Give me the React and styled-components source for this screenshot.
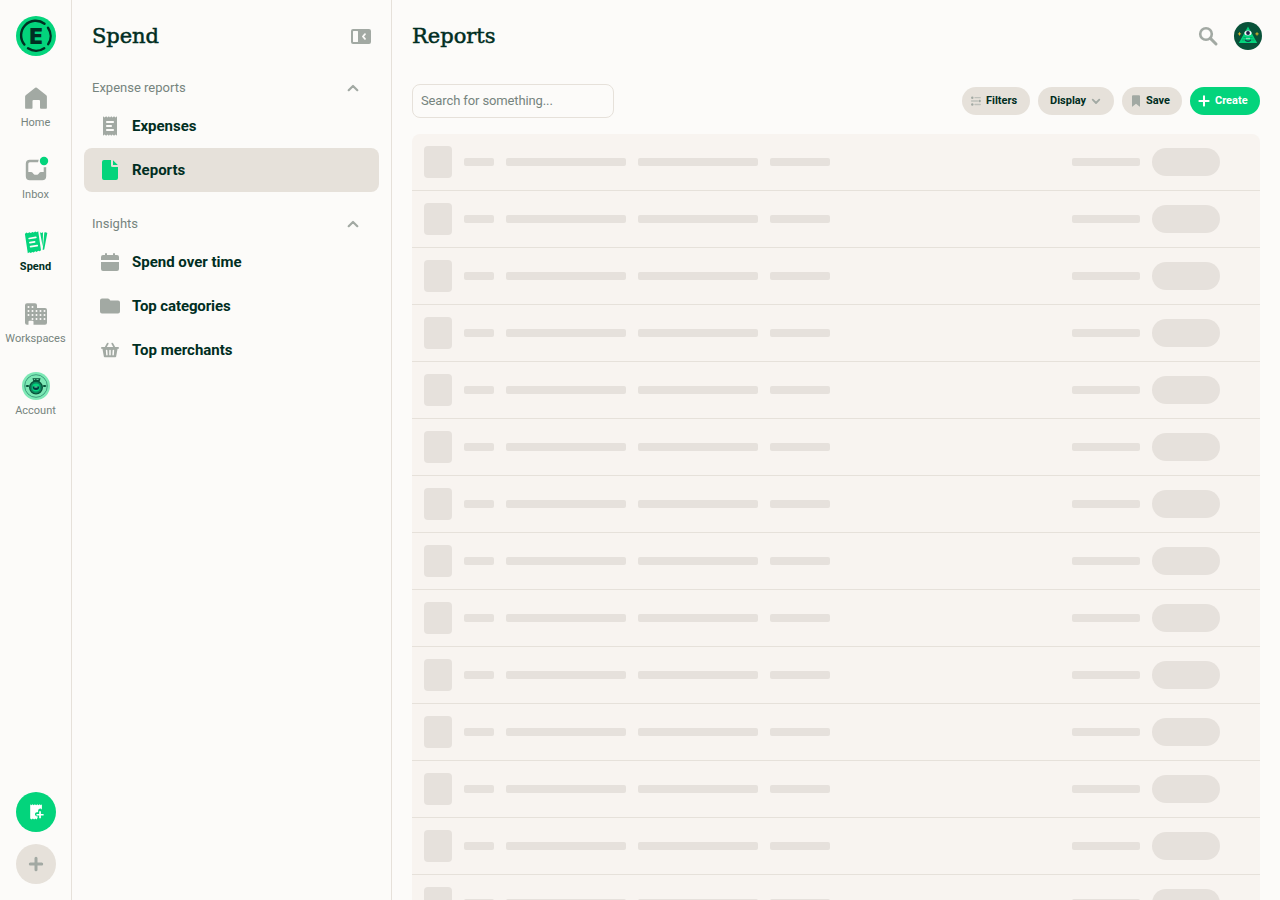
import styled, { createGlobalStyle } from "styled-components"

const GREEN = '#03D47C'
const DARK = '#002E22'
const GREY = '#A2A9A3'
const MUTED = '#76847E'
const BEIGE = '#E6E1DA'

const rows = Array.from({ length: 14 }, (_, i) => i)

export default function App() {
    return (
        <Page>
            <GlobalStyle />
            <Rail />
            <Sidebar />
            <Main />
        </Page>
    )
}

function Rail() {
    return (
        <RailBar>
            <LogoBox><Logo /></LogoBox>
            <RailItem>
                <RailIcon><HomeIcon /></RailIcon>
                <RailLabel>Home</RailLabel>
            </RailItem>
            <RailItem>
                <RailIcon><InboxIcon /></RailIcon>
                <RailLabel>Inbox</RailLabel>
            </RailItem>
            <RailItem>
                <RailIcon><SpendIcon /></RailIcon>
                <RailLabel $active>Spend</RailLabel>
            </RailItem>
            <RailItem>
                <RailIcon><BuildingIcon /></RailIcon>
                <RailLabel>Workspaces</RailLabel>
            </RailItem>
            <RailItem>
                <RailIcon><WorkspaceAvatar /></RailIcon>
                <RailLabel>Account</RailLabel>
            </RailItem>
            <RailBottom>
                <RoundButton $color={GREEN}><ReceiptPlusIcon /></RoundButton>
                <RoundButton $color={BEIGE}><PlusIcon size={20} color={GREY} /></RoundButton>
            </RailBottom>
        </RailBar>
    )
}

function Sidebar() {
    return (
        <SidePanel>
            <SideHeader>
                <Title $spacing="-0.05px">Spend</Title>
                <CollapseIcon />
            </SideHeader>
            <Section>
                <SectionTitle><span>Expense reports</span> <Chevron size={12} /></SectionTitle>
                <NavItem><NavIcon><ReceiptIcon /></NavIcon>Expenses</NavItem>
                <NavItem $active><NavIcon><DocumentIcon /></NavIcon>Reports</NavItem>
            </Section>
            <Section>
                <SectionTitle><span>Insights</span> <Chevron size={12} /></SectionTitle>
                <NavItem><NavIcon><CalendarIcon /></NavIcon>Spend over time</NavItem>
                <NavItem $spacing="-0.1px"><NavIcon><FolderIcon /></NavIcon>Top categories</NavItem>
                <NavItem><NavIcon><BasketIcon /></NavIcon>Top merchants</NavItem>
            </Section>
        </SidePanel>
    )
}

function Main() {
    return (
        <Content>
            <TopBar>
                <Title>Reports</Title>
                <TopActions>
                    <SearchIcon />
                    <UserAvatar />
                </TopActions>
            </TopBar>
            <Toolbar>
                <SearchInput placeholder="Search for something..." />
                <Buttons>
                    <PillButton $width={68}><FilterIcon /><span>Filters</span></PillButton>
                    <PillButton $width={76} $pad={12}><span>Display</span><Chevron size={12} down /></PillButton>
                    <PillButton $width={60}><BookmarkIcon /><span>Save</span></PillButton>
                    <PillButton $width={70} $gap={5} $primary><PlusIcon size={12} color="white" /><span>Create</span></PillButton>
                </Buttons>
            </Toolbar>
            <Table>
                {rows.map((r) =>
                    <Row key={r}>
                        <Thumb />
                        <Bar $width={30} />
                        <Bar $width={120} />
                        <Bar $width={120} />
                        <Bar $width={60} />
                        <Spacer />
                        <Bar $width={68} />
                        <Pill />
                    </Row>
                )}
            </Table>
        </Content>
    )
}

/* icons */

function Logo() {
    return (
        <svg width="40" height="40" viewBox="0 0 40 40">
            <circle cx="20" cy="20" r="20" fill={GREEN} />
            <g fill="none" stroke={DARK} strokeWidth="2.4" strokeLinecap="round">
                <path d="M8.400 28.600A14.600 14.600 0 0 1 28.500 7.700" />
                <path d="M32 11.800A14.600 14.600 0 0 1 32.200 28.200" />
                <path d="M12 32.300A14.600 14.600 0 0 0 28.200 32.200" />
            </g>
            <text x="20" y="28" textAnchor="middle" fontFamily="Inter, sans-serif" fontWeight="900" fontSize="21.5" fill={DARK}>E</text>
        </svg>
    )
}

function HomeIcon() {
    return (
        <svg width="24" height="24" viewBox="0 0 24 24" fill={GREY}>
            <path d="M11.2 1.7a1.3 1.3 0 0 1 1.6 0l9.2 7.2c.6.4.9 1 .9 1.700V21.700c0 .7-.4 1.100-1 1.100h-5c-.6 0-.9-.4-.9-1V15a1 1 0 0 0-1-1H9.500a1 1 0 0 0-1 1v6.800c0 .6-.4 1-1 1H2.200c-.7 0-1.100-.4-1.100-1.100V10.600c0-.7.300-1.300.9-1.700z" />
        </svg>
    )
}

function InboxIcon() {
    return (
        <svg width="28" height="28" viewBox="0 0 28 28">
            <path d="M16.800 3.800H7.800a4 4 0 0 0-4 4v12.400a4 4 0 0 0 4 4h12.400a4 4 0 0 0 4-4V11a6 6 0 0 1-2.500.2V16h-2.900a1.500 1.500 0 0 0-1.200.6l-1.200 1.500a1.500 1.500 0 0 1-1.200.6h-2.400a1.500 1.500 0 0 1-1.200-.6l-1.200-1.500A1.500 1.500 0 0 0 9.200 16H6.300V7.800A1.500 1.500 0 0 1 7.800 6.300h8.300a6 6 0 0 1 .7-2.500z" fill={GREY} />
            <circle cx="22" cy="5" r="4.200" fill={GREEN} />
        </svg>
    )
}

function SpendIcon() {
    return (
        <svg width="24" height="24" viewBox="0 0 24 24">
            <path d="M.9 3.900 2.300 2.600 3.900 3.300 5.300 2.200 6.900 2.900 8.300 1.900 9.800 2.600 11.200 1.500 12.700 2.200 14.200 1.200 17 20.200 15.600 21.300 14.100 20.700 12.700 21.900 11.200 21.300 9.700 22.500 8.300 21.900 6.800 23 5.400 22.300 3.800 23.300z" fill={GREEN} />
            <path d="M16 2.300 17.400 2.900 19 2.300 18.700 16.600z" fill={GREEN} />
            <path d="M20.300 2.600 21.700 2.200 23.300 3.100 20.200 19.500 18.700 19.900z" fill={GREEN} />
            <g stroke="#FCFBF9" strokeWidth="1.700" strokeLinecap="round">
                <path d="M5.200 8.500 11.800 7.400M5.900 12.600 10.600 11.800M6.600 16.700 13.200 15.600" />
            </g>
        </svg>
    )
}

function BuildingIcon() {
    const at = [[5, 5], [9, 5], [5, 9], [9, 9], [5, 13], [9, 13], [13, 9], [17, 9], [21, 9], [13, 13], [17, 13], [21, 13], [13, 17], [17, 17], [21, 17], [9, 17]]
    return (
        <svg width="24" height="24" viewBox="0 0 24 24">
            <path d="M3 1.200h8a2 2 0 0 1 2 2V6h8a2 2 0 0 1 2 2v12.800a2 2 0 0 1-2 2H9.500v-3a1 1 0 0 0-1-1h-3a1 1 0 0 0-1 1v3H3a2 2 0 0 1-2-2V3.200a2 2 0 0 1 2-2z" fill={GREY} />
            {at.map(([x, y]) => <circle key={x + '-' + y} cx={x - .5} cy={y} r="1" fill="#FCFBF9" />)}
        </svg>
    )
}

function WorkspaceAvatar() {
    return (
        <svg width="28" height="28" viewBox="0 0 28 28">
            <circle cx="14" cy="14" r="14" fill="#7DE8B5" />
            <circle cx="14" cy="14" r="11.300" fill="none" stroke="#2B8C6E" strokeWidth=".8" />
            <path d="M10.500 6.200h8l-1 3.800h-6z" fill="#085239" />
            <path d="M11.800 7.500h1.400M14.500 7.500h2" stroke="#7DE8B5" strokeWidth=".8" />
            <circle cx="14" cy="15.500" r="6.300" fill="#0E8A62" stroke="#085239" strokeWidth="1.300" />
            <circle cx="14" cy="15.500" r="3.900" fill="#03D47C" />
            <path d="M10.700 14.500h6.600a3.300 3.600 0 0 1-6.600 0z" fill="#003C40" />
            <path d="M12.400 14.500h3v1h-3z" fill="#7DE8B5" />
            <path d="M3.800 14h3M21.200 14h3" stroke="#085239" strokeWidth="1.400" />
            <circle cx="5.600" cy="14" r="1.100" fill="#085239" />
            <circle cx="22.400" cy="14" r="1.100" fill="#085239" />
        </svg>
    )
}

function UserAvatar() {
    return (
        <svg width="28" height="28" viewBox="0 0 28 28">
            <circle cx="14" cy="14" r="14" fill="#085239" />
            <path d="M14 4.500 23.200 21H4.800z" fill="#03D47C" />
            <path d="M11.500 9h5M9.500 15.500h2.500M16 15.500h2.500M8 18h3M17 18h3.500" stroke="#0A9B63" strokeWidth=".8" />
            <ellipse cx="14" cy="11" rx="3.600" ry="2.500" fill="#F5F3F8" />
            <circle cx="14" cy="11" r="1.900" fill="#1D2346" />
            <path d="M11 17.200q3 2.600 6 0v1.600q-3 2.600-6 0z" fill="#14404A" />
            <path d="M12 16.500h4" stroke="#A9DCC5" strokeWidth=".8" />
            <path d="M5.500 10.300v3.200M3.900 11.900h3.200M23 10.300v3.200M21.400 11.900h3.200" stroke="#D9B72B" strokeWidth="1" />
        </svg>
    )
}

function ReceiptPlusIcon() {
    return (
        <svg width="20" height="20" viewBox="0 0 20 20" fill="white">
            <path d="M4.200 2.300 5.300 3.200 6.500 2.300 7.700 3.200 8.900 2.300 10.100 3.200 11.300 2.300 12.500 3.200 13.700 2.300 14.900 3.200 15.900 2.300V7.700a2 2 0 0 0-3.800 1v1.600h-1.300a2 2 0 0 0-.5 3.900h1.300v1.600L10.500 17.500 9.300 16.600 8.100 17.500 6.900 16.600 5.700 17.500 4.200 16.600z" />
            <path d="M13.200 9.200h1.700v2.700h2.700v1.700h-2.700v2.700h-1.700v-2.700h-2.700v-1.700h2.700z" />
        </svg>
    )
}

function PlusIcon({ size, color }) {
    return (
        <svg width={size} height={size} viewBox="0 0 20 20">
            <path d={size > 12 ? "M10 4.300v11.400M4.300 10h11.400" : "M10 2.300v15.400M2.300 10h15.400"} stroke={color} strokeWidth={size > 12 ? 3 : 3.400} strokeLinecap="round" />
        </svg>
    )
}

function Chevron({ size, down }) {
    return (
        <svg width={size} height={size} viewBox="0 0 12 12">
            <path d={down ? "M2.700 4.700 6 8l3.300-3.300" : "M1.700 8.200 6 4l4.300 4.200"} fill="none" stroke={GREY} strokeWidth={down ? 1.800 : 2.200} strokeLinecap="round" strokeLinejoin="round" />
        </svg>
    )
}

function CollapseIcon() {
    return (
        <svg width="20" height="20" viewBox="0 0 20 20">
            <path fillRule="evenodd" d="M2 3h16a2 2 0 0 1 2 2v11a2 2 0 0 1-2 2H2a2 2 0 0 1-2-2V5a2 2 0 0 1 2-2zM2.500 5a.5.500 0 0 0-.5.500v10a.5.500 0 0 0 .5.500h4a.5.500 0 0 0 .5-.5v-10a.5.500 0 0 0-.5-.5z" fill={GREY} />
            <path d="M14 8.200 11.900 10.500l2.100 2.300" fill="none" stroke="#FCFBF9" strokeWidth="1.800" strokeLinecap="round" strokeLinejoin="round" />
        </svg>
    )
}

function ReceiptIcon() {
    return (
        <svg width="20" height="20" viewBox="0 0 20 20">
            <path d="M3 .3 4.500 1.400 6.200 .3 7.500 1.400 8.800 .3 10 1.400 11.300 .3 12.600 1.400 14 .3 15.500 1.400 17 .3V19.700L15.500 18.600 14 19.700 12.600 18.600 11.300 19.700 10 18.600 8.800 19.700 7.500 18.600 6.200 19.700 4.500 18.600 3 19.700z" fill={GREY} />
            <path d="M6.900 6h6.200M6.900 10h4.200M6.900 14h6.200" stroke="#FCFBF9" strokeWidth="1.900" strokeLinecap="round" />
        </svg>
    )
}

function DocumentIcon() {
    return (
        <svg width="20" height="20" viewBox="0 0 20 20" fill={GREEN}>
            <path d="M4 0h7v5.500A1.500 1.500 0 0 0 12.500 7H18v11a2 2 0 0 1-2 2H4a2 2 0 0 1-2-2V2a2 2 0 0 1 2-2z" />
            <path d="M13 .2 17.800 5H13z" />
        </svg>
    )
}

function CalendarIcon() {
    return (
        <svg width="20" height="20" viewBox="0 0 20 20" fill={GREY}>
            <path d="M5 2a1 1 0 0 1 2 0v1h6V2a1 1 0 0 1 2 0v1h2a2 2 0 0 1 2 2v3H1V5a2 2 0 0 1 2-2h2zM1 10h18v7a2 2 0 0 1-2 2H3a2 2 0 0 1-2-2z" />
        </svg>
    )
}

function FolderIcon() {
    return (
        <svg width="20" height="20" viewBox="0 0 20 20" fill={GREY}>
            <path d="M2 2.500h5.800c.7 0 1.200.3 1.600.8l.9 1.200H18a2 2 0 0 1 2 2v9a2 2 0 0 1-2 2H2a2 2 0 0 1-2-2v-11a2 2 0 0 1 2-2z" />
        </svg>
    )
}

function BasketIcon() {
    return (
        <svg width="20" height="20" viewBox="0 0 20 20">
            <path d="M1.900 7.900h16.200M5.600 7.400 7.700 3.600M14.400 7.400 12.300 3.600" stroke={GREY} strokeWidth="1.800" strokeLinecap="round" />
            <path d="M2.300 8h15.400l-1.500 8.300c-.1.700-.6 1-1.200 1H5c-.6 0-1.100-.3-1.200-1z" fill={GREY} />
            <path d="M6.600 10.400 6.900 14.800M10 10.400V14.800M13.400 10.400 13.100 14.800" stroke="#FCFBF9" strokeWidth="1.500" strokeLinecap="round" />
        </svg>
    )
}

function SearchIcon() {
    return (
        <svg width="20" height="20" viewBox="0 0 20 20" fill="none" stroke={GREY}>
            <circle cx="8" cy="8" r="5.800" strokeWidth="2.600" />
            <path d="M12.400 12.400 18 18" strokeWidth="2.900" strokeLinecap="round" />
        </svg>
    )
}

function FilterIcon() {
    return (
        <svg width="12" height="12" viewBox="0 0 12 12">
            <g stroke="#BFC1BB" strokeWidth="1.300" strokeLinecap="round">
                <path d="M5 2.700h5.300M1.500 6h6M5 9.500h5.300" />
            </g>
            <g fill={GREY}>
                <circle cx="2.300" cy="2.700" r="1.200" />
                <circle cx="9.700" cy="6" r="1.200" />
                <circle cx="2.300" cy="9.500" r="1.200" />
            </g>
        </svg>
    )
}

function BookmarkIcon() {
    return (
        <svg width="12" height="12" viewBox="0 0 12 12" fill={GREY}>
            <path d="M3 .3h6a1 1 0 0 1 1 1v10.100c0 .3-.3.400-.5.200L6 8.700 2.500 11.600c-.2.200-.5.100-.5-.2V1.300a1 1 0 0 1 1-1z" />
        </svg>
    )
}

const GlobalStyle = createGlobalStyle`
    *{
        box-sizing: border-box;
    }
    body{
        margin: 0;
        overflow: hidden;
        background-color: #FCFBF9;
        font-family: 'Roboto', sans-serif;
        color: ${DARK};
    }
    svg{
        display: block;
        flex-shrink: 0;
    }
`

const Page = styled.div`
    display: flex;
    width: 100%;
    height: 900px;
    overflow: hidden;
`

const RailBar = styled.div`
    display: flex;
    flex-direction: column;
    width: 72px;
    height: 100%;
    border-right: solid 1px ${BEIGE};
    flex-shrink: 0;
`

const LogoBox = styled.div`
    height: 72px;
    padding: 16px;
`

const RailItem = styled.div`
    display: flex;
    flex-direction: column;
    align-items: center;
    height: 72px;
    width: 72px;
    padding-top: 12px;
`

const RailIcon = styled.div`
    display: flex;
    align-items: center;
    justify-content: center;
    width: 28px;
    height: 28px;
`

const RailLabel = styled.div`
    margin-top: 3px;
    width: 72px;
    padding-right: 1px;
    text-align: center;
    font-size: 11px;
    line-height: 16px;
    font-weight: ${props => props.$active ? 700 : 400};
    color: ${props => props.$active ? DARK : MUTED};
`

const RailBottom = styled.div`
    display: flex;
    flex-direction: column;
    gap: 12px;
    margin-top: auto;
    padding: 16px;
`

const RoundButton = styled.div`
    display: flex;
    align-items: center;
    justify-content: center;
    width: 40px;
    height: 40px;
    border-radius: 50%;
    background-color: ${props => props.$color};
`

const SidePanel = styled.div`
    width: 320px;
    height: 100%;
    border-right: solid 1px ${BEIGE};
    flex-shrink: 0;
`

const SideHeader = styled.div`
    display: flex;
    align-items: center;
    justify-content: space-between;
    height: 72px;
    padding: 0 20px;
`

const Title = styled.h1`
    margin: 0;
    font-family: 'DejaVu Serif', serif;
    font-size: 21px;
    font-weight: 400;
    line-height: 28px;
    letter-spacing: ${props => props.$spacing || '0'};
    -webkit-text-stroke: 0.5px ${DARK};
`

const Section = styled.div`
    padding: 0 12px;
    margin-bottom: 16px;
`

const SectionTitle = styled.div`
    display: flex;
    align-items: center;
    justify-content: space-between;
    height: 32px;
    padding: 0 20px 0 8px;
    font-size: 13px;
    color: ${MUTED};
    span{
        padding-bottom: 2px;
    }
`

const NavItem = styled.div`
    display: flex;
    align-items: center;
    gap: 12px;
    height: 44px;
    padding-left: 16px;
    border-radius: 8px;
    font-size: 15px;
    font-weight: 700;
    letter-spacing: ${props => props.$spacing || '0'};
    background-color: ${props => props.$active ? BEIGE : 'transparent'};
`

const NavIcon = styled.div`
    width: 20px;
    height: 20px;
`

const Content = styled.div`
    flex: 1;
    padding: 0 20px;
`

const TopBar = styled.div`
    display: flex;
    align-items: center;
    justify-content: space-between;
    height: 72px;
`

const TopActions = styled.div`
    display: flex;
    align-items: center;
    gap: 16px;
    margin-right: -2px;
`

const Toolbar = styled.div`
    display: flex;
    align-items: center;
    justify-content: space-between;
    height: 34px;
    margin: 12px 0 16px;
`

const SearchInput = styled.input`
    width: 202px;
    height: 34px;
    padding: 0 8px 2px;
    border: solid 1px ${BEIGE};
    border-radius: 8px;
    background-color: transparent;
    font-family: 'Roboto', sans-serif;
    font-size: 13px;
    letter-spacing: -0.12px;
    outline: none;
    &::placeholder{
        color: ${MUTED};
        opacity: 1;
    }
`

const Buttons = styled.div`
    display: flex;
    gap: 8px;
`

const PillButton = styled.button`
    display: flex;
    align-items: center;
    gap: ${props => props.$gap || 4}px;
    width: ${props => props.$width}px;
    height: 28px;
    padding: 0 0 0 ${props => props.$pad || 8}px;
    border: none;
    border-radius: 14px;
    background-color: ${props => props.$primary ? GREEN : BEIGE};
    color: ${props => props.$primary ? 'white' : DARK};
    font-family: 'Roboto', sans-serif;
    font-size: 11px;
    font-weight: 700;
    cursor: pointer;
    span{
        padding-bottom: 2px;
    }
`

const Table = styled.div`
    border-radius: 8px 8px 0 0;
    background-color: #F8F4F0;
    overflow: hidden;
`

const Row = styled.div`
    display: flex;
    align-items: center;
    gap: 12px;
    height: 57px;
    padding: 0 40px 0 12px;
    border-bottom: solid 1px ${BEIGE};
`

const Thumb = styled.div`
    width: 28px;
    height: 32px;
    border-radius: 4px;
    background-color: #E6E1DC;
`

const Bar = styled.div`
    width: ${props => props.$width}px;
    height: 8px;
    border-radius: 2px;
    background-color: #E6E1DC;
`

const Spacer = styled.div`
    flex: 1;
`

const Pill = styled.div`
    width: 68px;
    height: 28px;
    border-radius: 14px;
    background-color: #E6E1DC;
`
